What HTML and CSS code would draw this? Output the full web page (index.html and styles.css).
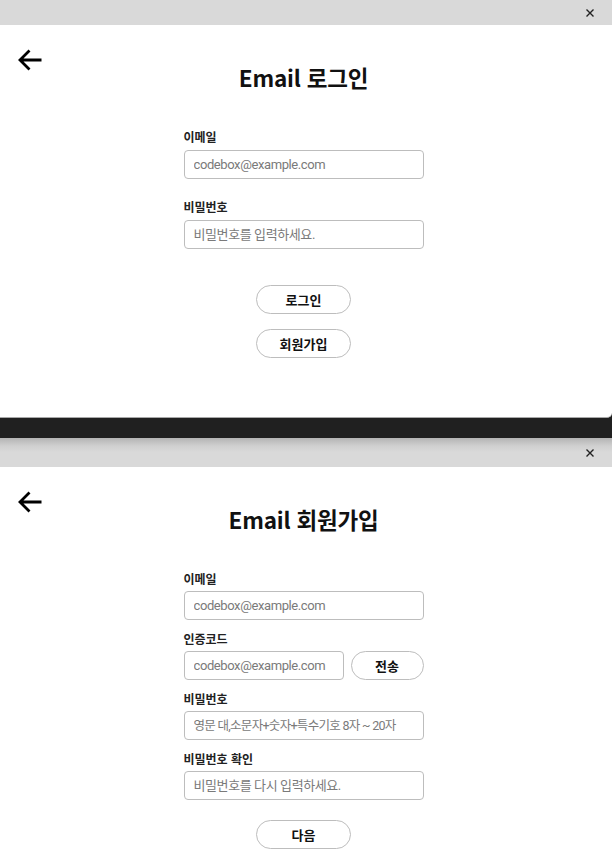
FILE: index.html
```html
<!DOCTYPE html>
<html lang="ko">
<head>
<meta charset="utf-8">
<title>Email 로그인</title>
<link rel="stylesheet" href="styles.css">
</head>
<body>
<section class="window window-login">
  <div class="titlebar">
    <svg class="close" viewBox="0 0 8 8" width="8" height="8"><path d="M0.5 0.5L7.5 7.5M7.5 0.5L0.5 7.5"/></svg>
  </div>
  <div class="content">
    <div class="header">
      <svg class="back" viewBox="0 0 26 24" width="26" height="24"><path d="M24.5 12H3M12.5 2.5L3 12L12.5 21.5"/></svg>
      <h1 class="title">Email 로그인</h1>
    </div>
    <form class="form form-login">
      <div class="field">
        <label class="label">이메일</label>
        <input class="input" type="text" placeholder="codebox@example.com">
      </div>
      <div class="field">
        <label class="label">비밀번호</label>
        <input class="input" type="password" placeholder="비밀번호를 입력하세요.">
      </div>
      <div class="actions">
        <button class="pill" type="button">로그인</button>
        <button class="pill" type="button">회원가입</button>
      </div>
    </form>
  </div>
</section>
<section class="window window-signup">
  <div class="titlebar titlebar-shadow">
    <svg class="close" viewBox="0 0 8 8" width="8" height="8"><path d="M0.5 0.5L7.5 7.5M7.5 0.5L0.5 7.5"/></svg>
  </div>
  <div class="content">
    <div class="header">
      <svg class="back" viewBox="0 0 26 24" width="26" height="24"><path d="M24.5 12H3M12.5 2.5L3 12L12.5 21.5"/></svg>
      <h1 class="title">Email 회원가입</h1>
    </div>
    <form class="form form-signup">
      <div class="field">
        <label class="label">이메일</label>
        <input class="input" type="text" placeholder="codebox@example.com">
      </div>
      <div class="field">
        <label class="label">인증코드</label>
        <div class="row">
          <input class="input input-short" type="text" placeholder="codebox@example.com">
          <button class="pill pill-send" type="button">전송</button>
        </div>
      </div>
      <div class="field">
        <label class="label">비밀번호</label>
        <input class="input input-mixed" type="password" placeholder="영문 대,소문자+숫자+특수기호 8자 ~ 20자">
      </div>
      <div class="field">
        <label class="label">비밀번호 확인</label>
        <input class="input" type="password" placeholder="비밀번호를 다시 입력하세요.">
      </div>
      <div class="actions">
        <button class="pill" type="button">다음</button>
      </div>
    </form>
  </div>
</section>
</body>
</html>
```
FILE: styles.css
```css
* { box-sizing: border-box; }
html, body { margin: 0; padding: 0; }
body {
  width: 612px;
  height: 856px;
  overflow: hidden;
  background: #202020;
  font-family: "Noto Sans CJK KR", "Noto Sans", sans-serif;
  color: #111;
}
.window { background: #fff; }
.window-login { height: 418px; border-bottom: 1px solid #a8a8a8; border-bottom-right-radius: 5px; margin-bottom: 20px; }
.window-signup { height: 418px; }
.titlebar {
  height: 25px;
  background: #d9d9d9;
  display: flex;
  align-items: center;
  justify-content: flex-end;
  padding-right: 18px;
}
.titlebar-shadow {
  height: 29px;
  background: linear-gradient(#b4b4b4 0, #d0d0d0 8px, #d9d9d9 14px);
}
.close { display: block; }
.close path { stroke: #222; stroke-width: 1.4; fill: none; }
.content { padding-right: 5px; }
.header {
  display: grid;
  grid-template-columns: 1fr auto 1fr;
  align-items: start;
}
.back { display: block; margin: 23px 0 0 17px; }
.back path { stroke: #000; stroke-width: 2.8; fill: none; stroke-linecap: butt; stroke-linejoin: miter; }
.title {
  grid-column: 2;
  margin: 37px 0 0;
  font-size: 22.5px;
  line-height: 30px;
  font-weight: 700;
  color: #111;
  letter-spacing: -0.2px;
}
.form {
  width: 240px;
  margin: 0 auto;
  display: flex;
  flex-direction: column;
}
.form-login { margin-top: 37px; gap: 20px; }
.form-signup { margin-top: 37px; gap: 11px; }
.field { display: flex; flex-direction: column; gap: 5px; }
.form-signup .field { gap: 4px; }
.label {
  font-size: 12px;
  line-height: 16px;
  font-weight: 700;
  color: #222;
}
.input {
  width: 100%;
  height: 29px;
  border: 1px solid #bdbdbd;
  border-radius: 4px;
  padding: 0 9px;
  font-family: "Roboto", "Noto Sans CJK KR", sans-serif;
  font-size: 13px;
  letter-spacing: -0.4px;
  color: #333;
  outline: none;
}
.input-mixed { font-size: 12.5px; letter-spacing: -0.7px; }
.input::placeholder { color: #7a7a7a; }
.row { display: flex; gap: 7px; }
.input-short { width: 160px; flex: none; }
.actions {
  display: flex;
  flex-direction: column;
  align-items: center;
  gap: 15px;
}
.form-login .actions { margin-top: 16px; }
.form-signup .actions { margin-top: 9px; }
.pill {
  width: 95px;
  height: 29px;
  border: 1px solid #bdbdbd;
  border-radius: 15px;
  background: #fff;
  font-family: "Noto Sans CJK KR", sans-serif;
  font-size: 13px;
  font-weight: 700;
  color: #111;
  padding: 0;
}
.pill-send { width: 73px; }
```
